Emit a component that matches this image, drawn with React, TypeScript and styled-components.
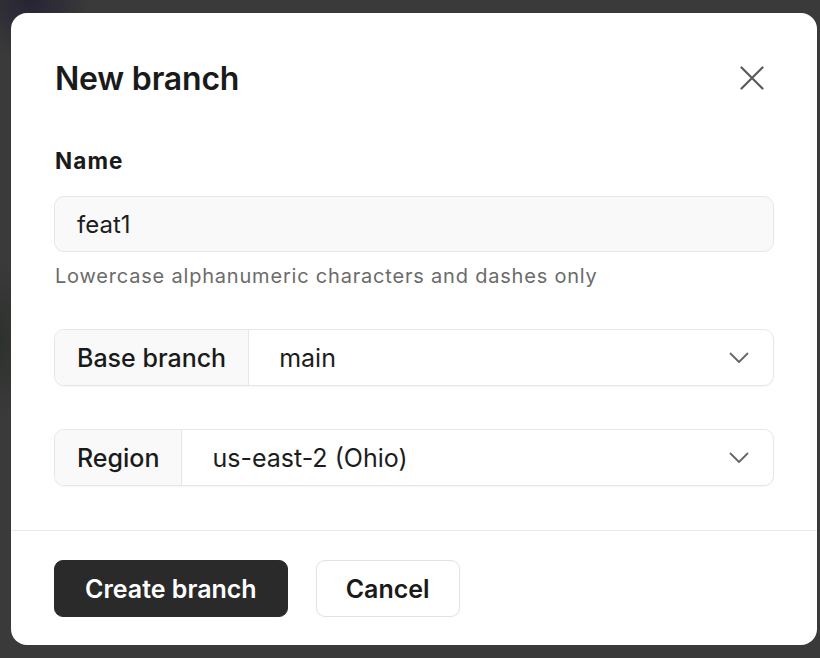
import React from "react";
import styled, { createGlobalStyle } from "styled-components";

const Global = createGlobalStyle`
  html, body { margin: 0; padding: 0; }
  body {
    background: #3a3a3a;
    font-family: Inter, "Noto Sans", sans-serif;
    -webkit-font-smoothing: antialiased;
  }
  * { box-sizing: border-box; }
`;

const Backdrop = styled.div`
  width: 820px;
  height: 658px;
  padding: 13px 3px 13px 11px;
  background:
    radial-gradient(circle at 30px 0px, #262434 0, rgba(38,36,52,0.6) 25px, rgba(58,58,58,0) 60px),
    radial-gradient(ellipse 30px 80px at 0px 340px, #2d312d 0, rgba(58,58,58,0) 100%),
    #3a3a3a;
`;

const Modal = styled.div`
  width: 806px;
  height: 632px;
  background: #ffffff;
  border-radius: 16px;
  display: flex;
  flex-direction: column;
  overflow: hidden;
`;

const Header = styled.div`
  display: flex;
  align-items: center;
  justify-content: space-between;
  padding: 46px 43px 0 43px;
  height: 84px;
`;

const Title = styled.h2`
  margin: 0;
  font-size: 32px;
  font-weight: 600;
  color: #1a1a1a;
  letter-spacing: -0.2px;
  line-height: 38px;
  margin-top: 2px;
  margin-left: 1px;
`;

const CloseButton = styled.button`
  border: none;
  background: none;
  padding: 0;
  width: 24px;
  height: 24px;
  display: flex;
  align-items: center;
  justify-content: center;
  margin-right: 10px;
  cursor: pointer;
`;

const Body = styled.div`
  padding: 0 43px;
  display: flex;
  flex-direction: column;
  flex: 1;
`;

const FieldLabel = styled.label`
  display: block;
  font-size: 22.5px;
  font-weight: 650;
  color: #1a1a1a;
  letter-spacing: 1.1px;
  line-height: 26px;
  margin-top: 51px;
  margin-left: 1px;
  margin-bottom: 22px;
`;

const TextInput = styled.div`
  height: 56px;
  border: 1px solid #e6e6e6;
  border-radius: 10px;
  background: #f9f9f9;
  display: flex;
  align-items: center;
  padding: 0 22px;
  font-size: 24px;
  color: #1c1c1c;
`;

const Helper = styled.div`
  font-size: 20px;
  letter-spacing: 0.8px;
  color: #6b6b6b;
  line-height: 24px;
  margin-top: 12px;
  margin-left: 1px;
  margin-bottom: 41px;
`;

const SelectRow = styled.div<{ $gap?: number }>`
  height: 57px;
  border: 1px solid #e6e6e6;
  border-radius: 10px;
  display: flex;
  overflow: hidden;
  box-shadow: 0 1px 2px rgba(0, 0, 0, 0.04);
  margin-bottom: ${(p) => p.$gap ?? 0}px;
`;

const SelectLabel = styled.div`
  background: #f9f9f9;
  border-right: 1px solid #e6e6e6;
  display: flex;
  align-items: center;
  padding: 0 22px;
  font-size: 25px;
  font-weight: 500;
  color: #1a1a1a;
`;

const SelectValue = styled.div`
  flex: 1;
  display: flex;
  align-items: center;
  justify-content: space-between;
  padding: 0 24px 0 30px;
  font-size: 25px;
  color: #1c1c1c;
`;

const Divider = styled.div`
  height: 1px;
  background: #ebebeb;
`;

const Footer = styled.div`
  display: flex;
  gap: 28px;
  padding: 29px 43px 28px 43px;
`;

const Button = styled.button<{ $primary?: boolean }>`
  height: 57px;
  border-radius: 9px;
  font-family: Inter, "Noto Sans", sans-serif;
  font-size: 25px;
  font-weight: 600;
  padding: 0 ${(p) => (p.$primary ? 30 : 29)}px;
  border: 1px solid ${(p) => (p.$primary ? "#2a2a2a" : "#e2e2e2")};
  background: ${(p) => (p.$primary ? "#2a2a2a" : "#ffffff")};
  color: ${(p) => (p.$primary ? "#ffffff" : "#1a1a1a")};
  cursor: pointer;
`;

const Chevron = () => (
  <svg width="20" height="12" viewBox="0 0 20 12" fill="none">
    <path d="M1.5 1.5 L10 10 L18.5 1.5" stroke="#666" strokeWidth="1.8" strokeLinecap="round" strokeLinejoin="round" />
  </svg>
);

export default function App() {
  return (
    <>
      <Global />
      <Backdrop>
        <Modal>
          <Header>
            <Title>New branch</Title>
            <CloseButton aria-label="Close">
              <svg width="24" height="24" viewBox="0 0 24 24" fill="none">
                <path d="M1.5 1.5 L22.5 22.5 M22.5 1.5 L1.5 22.5" stroke="#5a5a5a" strokeWidth="2.2" strokeLinecap="round" />
              </svg>
            </CloseButton>
          </Header>
          <Body>
            <FieldLabel>Name</FieldLabel>
            <TextInput>feat1</TextInput>
            <Helper>Lowercase alphanumeric characters and dashes only</Helper>
            <SelectRow $gap={43}>
              <SelectLabel>Base branch</SelectLabel>
              <SelectValue>
                main
                <Chevron />
              </SelectValue>
            </SelectRow>
            <SelectRow>
              <SelectLabel>Region</SelectLabel>
              <SelectValue>
                us-east-2 (Ohio)
                <Chevron />
              </SelectValue>
            </SelectRow>
          </Body>
          <Divider />
          <Footer>
            <Button $primary>Create branch</Button>
            <Button>Cancel</Button>
          </Footer>
        </Modal>
      </Backdrop>
    </>
  );
}
